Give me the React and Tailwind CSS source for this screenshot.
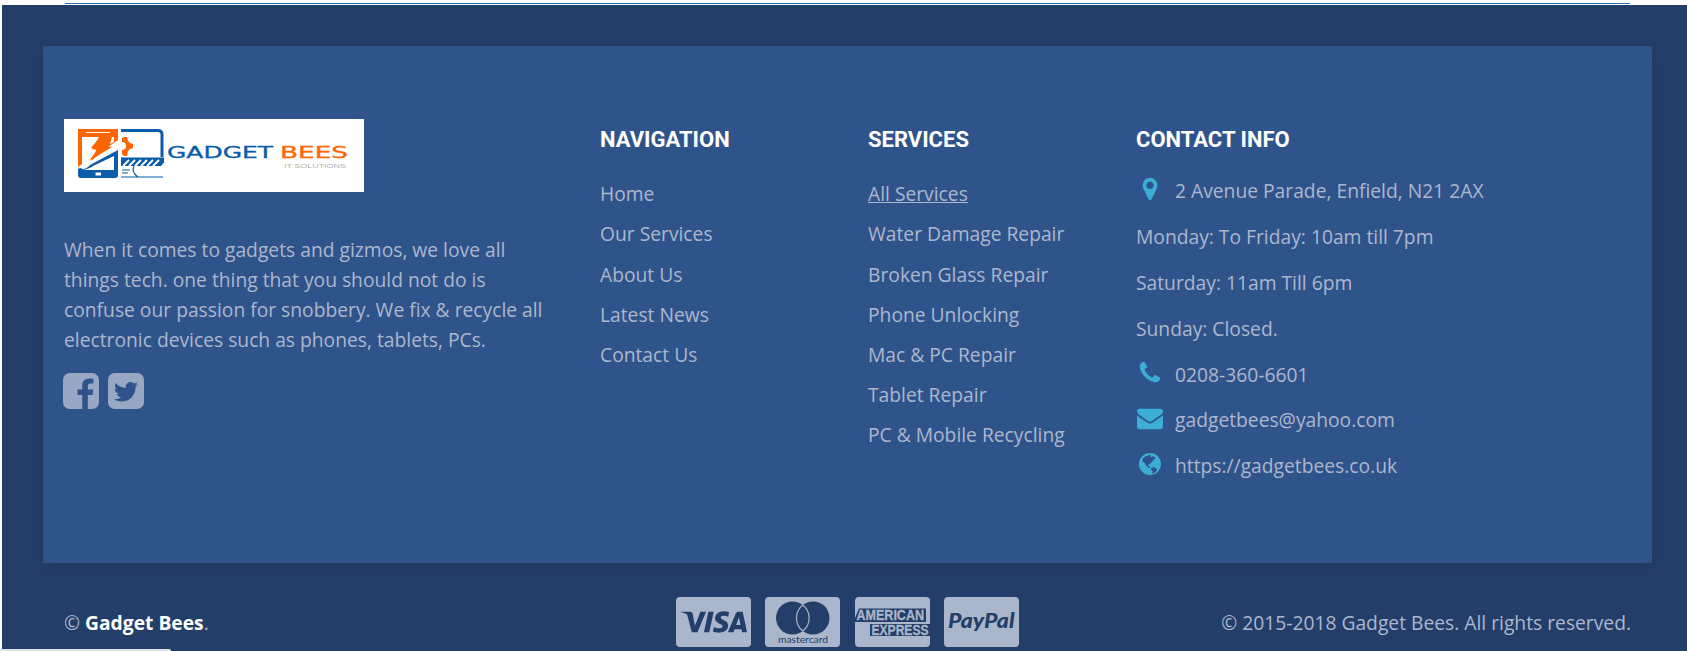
import React from "react";
import { SiVisa } from "react-icons/si";

const PATHS = {
  phone: "M1600 1240q0 27-10 70.5t-21 68.5q-21 50-122 106-94 51-186 51-27 0-53-3.5t-57.5-12.5-47-14.5-55.5-20.5-49-18q-98-35-175-83-127-79-264-216t-216-264q-48-77-83-175-3-9-18-49t-20.5-55.5-14.5-47-12.5-57.5-3.5-53q0-92 51-186 56-101 106-122 25-11 68.5-21t70.5-10q14 0 21 3 18 6 53 76 11 19 30 54t35 63.5 31 53.5q3 4 17.5 25t21.5 35.5 7 28.5q0 20-28.5 50t-62 55-62 53-28.5 46q0 9 5 22.5t8.5 20.5 14 24 11.5 19q76 137 174 235t235 174q2 1 19 11.5t24 14 20.5 8.5 22.5 5q18 0 46-28.5t53-62 55-62 50-28.5q14 0 28.5 7t35.5 21.5 25 17.5q25 15 53.5 31t63.5 35 54 30q70 35 76 53 3 7 3 21z",
  marker: "M1152 640q0-106-75-181t-181-75-181 75-75 181 75 181 181 75 181-75 75-181zm256 0q0 109-33 179l-364 774q-16 33-47.5 52t-67.5 19-67.5-19-46.5-52l-365-774q-33-70-33-179 0-212 150-362t362-150 362 150 150 362z",
  envelope: "M1792 710v794q0 66-47 113t-113 47h-1472q-66 0-113-47t-47-113v-794q44 49 101 87 362 246 497 345 57 42 92.5 65.5t94.5 48 110 24.5h2q51 0 110-24.5t94.5-48 92.5-65.5q170-123 498-345 57-39 100-87zm0-294q0 79-49 151t-122 123q-376 261-468 325-10 7-42.5 31t-54 38.5-52 32.5-57.5 27-50 9h-2q-23 0-50-9t-57.5-27-52-32.5-54-38.5-42.5-31q-91-64-262-182.5t-205-142.5q-62-42-117-115.5t-55-136.5q0-78 41.5-130t118.5-52h1472q65 0 112.5 47t47.5 113z",
  facebook: "M1376 128q119 0 203.5 84.5t84.5 203.5v960q0 119-84.5 203.5t-203.5 84.5h-188v-595h199l30-232h-229v-148q0-56 23.5-84t91.5-28l122-1v-207q-63-9-178-9-136 0-217.5 80t-81.5 226v171h-200v232h200v595h-532q-119 0-203.5-84.5t-84.5-203.5v-960q0-119 84.5-203.5t203.5-84.5h960z",
  twitter: "M1408 610q-56 25-121 34 68-40 93-117-65 38-134 51-61-66-153-66-87 0-148.5 61.5t-61.5 148.5q0 29 5 48-129-7-242-65t-192-155q-29 50-29 106 0 114 91 175-47-1-100-26v2q0 75 50 133.5t123 72.5q-29 8-51 8-13 0-39-4 21 63 74.5 104t121.5 42q-116 90-261 90-26 0-50-3 148 94 322 94 112 0 210-35.5t168-95 120.5-137 75-162 24.5-168.5q0-18-1-27 63-45 105-109zm256-194v960q0 119-84.5 203.5t-203.5 84.5h-960q-119 0-203.5-84.5t-84.5-203.5v-960q0-119 84.5-203.5t203.5-84.5h960q119 0 203.5 84.5t84.5 203.5z",
};

function Icon({ name, className }) {
  return (
    <svg viewBox="0 0 1792 1792" fill="currentColor" className={className} aria-hidden="true">
      <path d={PATHS[name]} />
    </svg>
  );
}

function Globe({ className }) {
  return (
    <svg viewBox="0 0 26 26" className={className} aria-hidden="true">
      <circle cx="13" cy="13" r="11" fill="currentColor" />
      <path
        fill="#2f548b"
        d="M6 7.5 8.5 5.2 11 5l.8-1.2 2 .3-.6 1.4 1.6.6 1-.9 2 .6.6 1.7-1.7.9-1.2 2-1.5 1.2-1 1.6-1.8.2.2 1.7 1.3.6.5 1.6-1.8-.6-2-2-1.6-2.4L5.2 10zM14.3 16.8l2.6-.5 3.2 1.7-.5 1.7-2.4 2.2-2.2.8.6-2.2-1.6-1.7z"
      />
    </svg>
  );
}

function Logo() {
  return (
    <svg viewBox="0 0 300 73" className="block h-[73px] w-[300px] bg-white" aria-label="Gadget Bees IT Solutions">
      <path fill="#fb6504" d="M14 10h40v11L44 28l-17 14 6-12-6-1 9-11H18v27l-4 3z" />
      <path d="M22 13.500h24" stroke="#fff" strokeWidth="1" />
      <path fill="#fff" d="M36 18h14v5l-4 2 2-7z" />
      <path fill="#fb6504" d="m35 18 12 0-6 9 7 1-23 14 8-11-5-1z" />
      <path fill="#0b5da9" d="M14 50q3-2 4 0 5 0 8-4l28-15v25q0 3-3 3H17q-3 0-3-3z" />
      <path fill="#fff" d="M18 51q7-1 11-4l21-10v14z" />
      <path fill="#fff" d="M31.500 53.500h5.500v3h-5.500z" />
      <path fill="none" stroke="#0b5da9" strokeWidth="3" d="M57 11.500h37q4 0 4 4V38" />
      <path fill="#fb6504" d="m58 19 2-1 3 0 1 4 2 2 3 1v4l-3 1-2 2-1 5-3 0-2-2z" />
      <circle cx="58" cy="27" r="4" fill="#fff" />
      <path fill="#0b5da9" d="M57 38.500h43v5l-3 3.500H57z" />
      <path stroke="#fff" strokeWidth="1.800" fill="none" d="m59 47 6-6m0 6 6-6m0 6 6-6m0 6 6-6m0 6 6-6m0 6 6-6" />
      <path stroke="#0b5da9" strokeWidth="1.200" d="M58 51h8m-8 3h6m-7 4h42M70 47q-3 6 4 11" fill="none" />
      <g fontFamily="'DejaVu Sans', sans-serif" fontWeight="400" fontSize="15" strokeWidth=".3">
        <text x="103" y="39" textLength="106" lengthAdjust="spacingAndGlyphs" fill="#0b5da9" stroke="#0b5da9">GADGET</text>
        <text x="216" y="39" textLength="68" lengthAdjust="spacingAndGlyphs" fill="#fb6504" stroke="#fb6504">BEES</text>
      </g>
      <text x="220" y="48.500" textLength="62" lengthAdjust="spacingAndGlyphs" fontFamily="'Liberation Sans', sans-serif" fontSize="5" fill="#b0b0b0">IT SOLUTIONS</text>
    </svg>
  );
}

const NAV = ["Home", "Our Services", "About Us", "Latest News", "Contact Us"];
const SERVICES = ["All Services", "Water Damage Repair", "Broken Glass Repair", "Phone Unlocking", "Mac & PC Repair", "Tablet Repair", "PC & Mobile Recycling"];
const CONTACT = [
  ["marker", "2 Avenue Parade, Enfield, N21 2AX"],
  [null, "Monday: To Friday: 10am till 7pm"],
  [null, "Saturday: 11am Till 6pm"],
  [null, "Sunday: Closed."],
  ["phone", "0208-360-6601"],
  ["envelope", "gadgetbees@yahoo.com"],
  ["globe", "https://gadgetbees.co.uk"],
];

function Heading({ children }) {
  return <h4 className="font-['Roboto',sans-serif] text-[22px] leading-[30px] font-bold text-white">{children}</h4>;
}

function LinkColumn({ title, links }) {
  return (
    <div className="w-[268px] shrink-0 pt-[6px]">
      <Heading>{title}</Heading>
      <ul className="mt-[19.200px]">
        {links.map((l) => (
          <li key={l} className="h-[40.2px] leading-[40px]">
            <a className={l === "All Services" ? "underline underline-offset-1" : ""}>{l}</a>
          </li>
        ))}
      </ul>
    </div>
  );
}

function Card({ children }) {
  return <div className="flex h-[50px] w-[75px] items-center justify-center rounded-[4px] bg-[#abb5cb] text-[#233e69]">{children}</div>;
}

export default function App() {
  return (
    <div className="flex h-[651px] w-[1687px] flex-col overflow-hidden bg-white pl-[2px] font-['Open_Sans',sans-serif] text-[19.25px] text-[#acb7cd]">
      <div className="h-[5px] shrink-0 pt-[3px]">
        <div className="ml-[63px] h-px w-[1565px] bg-[#2b6fa9]" />
      </div>
      <footer className="relative flex h-[646px] flex-col bg-[#233e69] pt-[41px]">
        <section className="ml-[41px] flex h-[517px] w-[1609px] shrink-0 bg-[#2f548b] pt-[73px] pl-[21px] shadow-[0_5px_15px_rgba(0,0,0,0.1)]">
          <div className="w-[536px] shrink-0">
            <Logo />
            <p className="mt-[43px] w-[490px] leading-[30px] whitespace-nowrap">
              When it comes to gadgets and gizmos, we love all<br />
              things tech. one thing that you should not do is<br />
              confuse our passion for snobbery. We fix &amp; recycle all<br />
              electronic devices such as phones, tablets, PCs.
            </p>
            <div className="mt-[15px] ml-[-4px] flex gap-[3px] text-[#97a7c4]">
              <Icon name="facebook" className="size-[42px]" />
              <Icon name="twitter" className="size-[42px]" />
            </div>
          </div>
          <LinkColumn title="NAVIGATION" links={NAV} />
          <LinkColumn title="SERVICES" links={SERVICES} />
          <div className="pt-[6px]">
            <Heading>CONTACT INFO</Heading>
            <ul className="mt-[13px]">
              {CONTACT.map(([icon, text]) => (
                <li key={text} className="flex h-[45.9px] leading-[46px]">
                  {icon && (
                    <span className="mt-[8px] mr-[12.5px] ml-[0.5px] size-[26px] shrink-0 text-[#3caed4]">
                      {icon === "globe" ? <Globe className="size-[26px]" /> : <Icon name={icon} className="size-[26px]" />}
                    </span>
                  )}
                  {text}
                </li>
              ))}
            </ul>
          </div>
        </section>
        <div className="flex items-start pt-[34px] pr-[56px] pl-[62px]">
          <p className="w-[612px] pt-[11px] leading-[30px]">© <b className="font-bold text-white">Gadget Bees</b>.</p>
          <div className="flex gap-[14.400px]">
            <Card><SiVisa className="size-[66px]" /></Card>
            <Card>
              <svg viewBox="0 0 75 50" className="h-full w-full">
                <circle cx="27.500" cy="21" r="16.500" fill="#233e69" />
                <circle cx="48" cy="21" r="16.500" fill="#233e69" />
                <path d="M37.800 8a16.500 16.500 0 0 1 0 26a16.500 16.500 0 0 1 0-26z" fill="#233e69" stroke="#abb5cb" strokeWidth="1.200" />
                <text x="13" y="45.500" textLength="50" lengthAdjust="spacingAndGlyphs" fontFamily="Lato, sans-serif" fontSize="9.500" fill="#233e69">mastercard</text>
              </svg>
            </Card>
            <Card>
              <svg viewBox="0 0 75 50" className="h-full w-full">
                <path fill="#233e69" d="M4 11.500h67V25H0v-4zM15 27h60v12H15z" />
                <g fontFamily="'Liberation Sans', sans-serif" fontWeight="700" fontSize="14" fill="#abb5cb" stroke="#abb5cb" strokeWidth=".3">
                  <text x="1.500" y="23.200" textLength="67.500" lengthAdjust="spacingAndGlyphs">AMERICAN</text>
                  <text x="16.500" y="38" textLength="57" lengthAdjust="spacingAndGlyphs">EXPRESS</text>
                </g>
              </svg>
            </Card>
            <Card>
              <svg viewBox="0 0 75 50" className="h-full w-full">
                <text x="4" y="31" textLength="66.500" lengthAdjust="spacingAndGlyphs" fontFamily="Lato, sans-serif" fontWeight="900" fontStyle="italic" fontSize="20" fill="#233e69">PayPal</text>
              </svg>
            </Card>
          </div>
          <p className="ml-auto pt-[11px] leading-[30px]">© 2015-2018 Gadget Bees. All rights reserved.</p>
        </div>
        <div className="absolute bottom-0 left-[-2px] h-[2px] w-[171px] rounded-tr-[3px] bg-[#dee1e6]" />
      </footer>
    </div>
  );
}
